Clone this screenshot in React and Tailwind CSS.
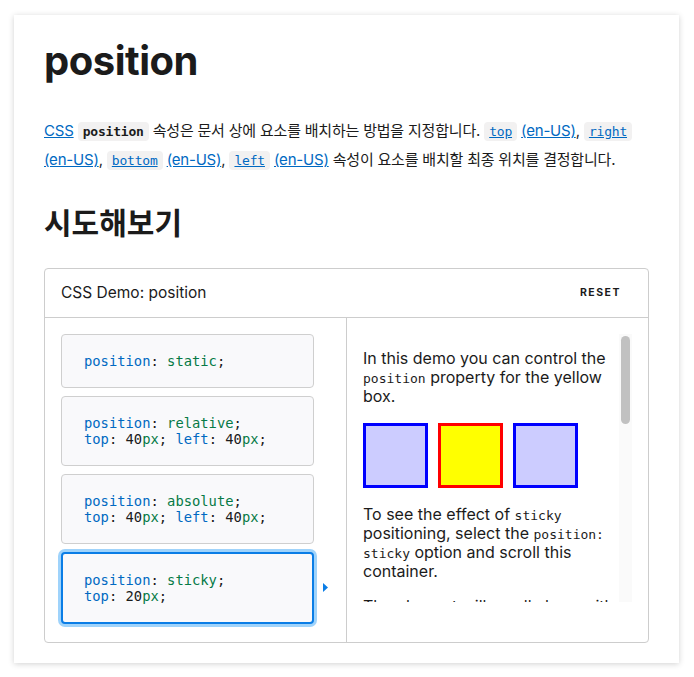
import React from "react";

const sans = { fontFamily: "Inter, 'Noto Sans CJK KR', sans-serif" };

function Code({ children, link }) {
  return (
    <code
      className={
        "rounded bg-[#f2f1f1] px-[5px] py-[2px] text-[13px] font-['DejaVu_Sans_Mono',monospace] " +
        (link ? "text-[#0069c2] underline font-normal" : "font-bold text-[#1b1b1b]")
      }
    >
      {children}
    </code>
  );
}

function Link({ children }) {
  return <a className="text-[#0069c2] underline">{children}</a>;
}

const P = ({ children }) => <span className="text-[#0069c2]">{children}</span>;
const V = ({ children }) => <span className="text-[#067a46]">{children}</span>;

function CodeBox({ children, selected }) {
  return (
    <div
      className={
        "w-[253px] rounded-[4px] bg-[#f9f9fb] py-[18px] font-['DejaVu_Sans_Mono',monospace] text-[13.8px] leading-4 text-[#1b1b1b] whitespace-pre " +
        (selected
          ? "border-2 border-[#0a7de6] px-[21px] ring-[3px] ring-[#9fd3fb]"
          : "border border-[#cfcfcf] px-[22px]")
      }
    >
      {children}
    </div>
  );
}

function Box({ yellow }) {
  return (
    <div
      className={
        "h-[65px] w-[65px] border-[3px] " +
        (yellow ? "border-[#ff0000] bg-[#ffff00]" : "border-[#0000ff] bg-[#ccccff]")
      }
    />
  );
}

const mono = "font-['DejaVu_Sans_Mono',monospace] text-[13px] leading-none";

export default function App() {
  return (
    <div className="min-h-[677px] bg-white pt-[15px] pl-[14px]" style={sans}>
      <div className="w-[665px] bg-white px-[30px] pt-[22px] pb-[20px] shadow-[0_1px_6px_rgba(0,0,0,0.18)]">
        <h1 className="text-[40px] font-bold leading-[48px] tracking-[-0.5px] text-[#1b1b1b]">position</h1>

        <p className="mt-[32px] text-[15px] leading-[28px] text-[#1b1b1b] tracking-[-0.2px]">
          <Link>CSS</Link> <Code>position</Code> 속성은 문서 상에 요소를 배치하는 방법을 지정합니다.{" "}
          <Code link>top</Code> <Link>(en-US)</Link>, <Code link>right</Code> <Link>(en-US)</Link>,{" "}
          <Code link>bottom</Code> <Link>(en-US)</Link>, <Code link>left</Code> <Link>(en-US)</Link> 속성이 요소를
          배치할 최종 위치를 결정합니다.
        </p>

        <h2 className="mt-[30px] text-[30px] font-semibold leading-[36px] text-[#1b1b1b]">시도해보기</h2>

        <div className="mt-[27px] rounded-[4px] border border-[#cdcdcd]">
          <div className="flex h-[49px] items-center justify-between border-b border-[#cdcdcd] pl-[16px] pr-[27px]">
            <span className="text-[15.5px] text-[#1b1b1b]">CSS Demo: position</span>
            <span className="text-[10.5px] font-bold tracking-[1.5px] text-[#1b1b1b]">RESET</span>
          </div>
          <div className="flex">
            <div className="flex w-[302px] border-r border-[#cdcdcd] pl-[16px] pt-[16px] pb-[18px]">
              <div className="flex flex-col gap-2">
                <CodeBox>
                  <P>position</P>: <V>static</V>;
                </CodeBox>
                <CodeBox>
                  <P>position</P>: <V>relative</V>;{"\n"}
                  <P>top</P>: 40<V>px</V>; <P>left</P>: 40<V>px</V>;
                </CodeBox>
                <CodeBox>
                  <P>position</P>: <V>absolute</V>;{"\n"}
                  <P>top</P>: 40<V>px</V>; <P>left</P>: 40<V>px</V>;
                </CodeBox>
                <CodeBox selected>
                  <P>position</P>: <V>sticky</V>;{"\n"}
                  <P>top</P>: 20<V>px</V>;
                </CodeBox>
              </div>
              <div className="flex flex-1 items-end pl-[9px] pb-[32px]">
                <svg width="5" height="9" viewBox="0 0 5 9">
                  <path d="M0 0 L5 4.5 L0 9 Z" fill="#0a7de6" />
                </svg>
              </div>
            </div>
            <div className="flex flex-1 p-[16px] pr-[16px]">
              <div className="h-[268px] flex-1 overflow-hidden pt-[15px] text-[16px] leading-[19px] text-[#1b1b1b]">
                <p>
                  In this demo you can control the <code className={mono}>position</code> property for the yellow
                  box.
                </p>
                <div className="mt-[17px] flex gap-[10px]">
                  <Box />
                  <Box yellow />
                  <Box />
                </div>
                <p className="mt-[17px]">
                  To see the effect of <code className={mono}>sticky</code> positioning, select the{" "}
                  <code className={mono}>position: sticky</code> option and scroll this container.
                </p>
                <p className="mt-[16px]">
                  The element will scroll along with its container, until it is at the top of the container (or
                  reaches the offset specified in top), and will then stop scrolling, so it stays visible.
                </p>
              </div>
              <div className="h-[268px] w-[13px] bg-[#fafafa] px-[2px] pt-[2px]">
                <div className="h-[88px] w-[9px] rounded-full bg-[#c1c1c1]" />
              </div>
            </div>
          </div>
        </div>
      </div>
    </div>
  );
}
